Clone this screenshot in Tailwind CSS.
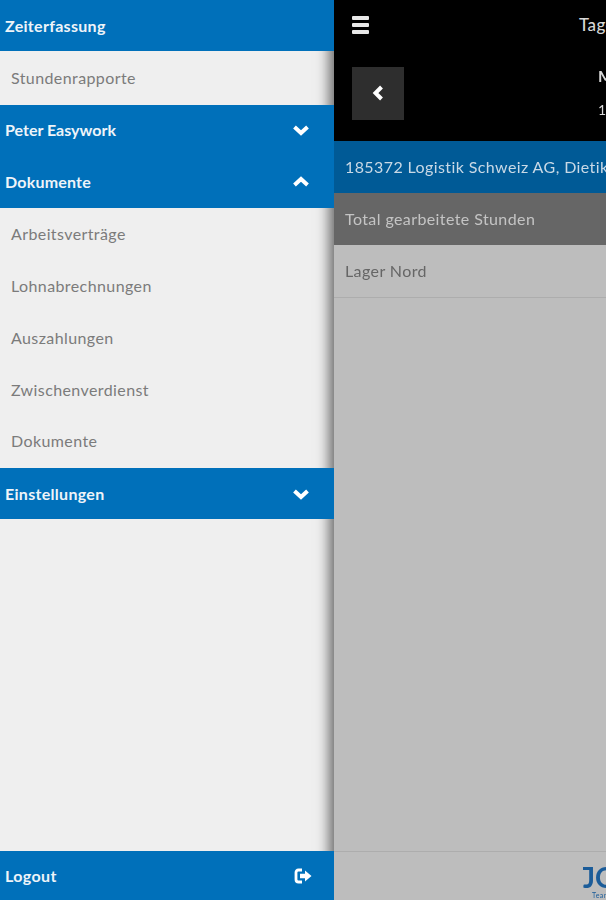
<!DOCTYPE html>
<html lang="de">
<head>
    <meta charset="UTF-8">
    <title>Zeiterfassung</title>
    <script src="https://cdn.jsdelivr.net/npm/@tailwindcss/browser@4"></script>
</head>
<body class="bg-[#bdbdbd]">
    <div class="flex h-[900px] w-[606px] overflow-hidden font-['Lato','Open_Sans',sans-serif] text-[16px] tracking-[0.4px] blur-[0.5px]">

        <!-- Sidebar -->
        <aside class="flex h-full w-[334px] shrink-0 flex-col bg-[#efefef]">
            <div class="relative z-20 flex h-[51px] shrink-0 items-center bg-[#0070ba] pl-[5px] font-bold tracking-[0.3px] text-[#eef4f9]">Zeiterfassung</div>
            <a class="flex h-[54px] shrink-0 items-center pl-[11px] text-[#7b7b7b]">Stundenrapporte</a>

            <div class="relative z-20 flex h-[51px] shrink-0 items-center justify-between bg-[#0070ba] pl-[5px] pr-[25px] pb-[1px] font-bold tracking-[0px] text-[#eef4f9]">
                <span>Peter Easywork</span>
                <svg class="h-[12px] w-[16px]" viewBox="0 0 16 12" fill="none" stroke="#fff" stroke-width="4"><path d="M1.5 3 L8 9 L14.5 3"/></svg>
            </div>
            <div class="relative z-20 flex h-[52px] shrink-0 items-center justify-between bg-[#0070ba] pl-[5px] pr-[25px] pb-[1px] font-bold tracking-[0.2px] text-[#eef4f9]">
                <span>Dokumente</span>
                <svg class="h-[12px] w-[16px]" viewBox="0 0 16 12" fill="none" stroke="#fff" stroke-width="4"><path d="M1.5 9 L8 3 L14.5 9"/></svg>
            </div>

            <a class="flex h-[52px] shrink-0 items-center pl-[11px] text-[#7b7b7b]">Arbeitsverträge</a>
            <a class="flex h-[52px] shrink-0 items-center pl-[11px] text-[#7b7b7b]">Lohnabrechnungen</a>
            <a class="flex h-[52px] shrink-0 items-center pl-[11px] text-[#7b7b7b]">Auszahlungen</a>
            <a class="flex h-[52px] shrink-0 items-center pl-[11px] text-[#7b7b7b]">Zwischenverdienst</a>
            <a class="flex h-[52px] shrink-0 items-center pb-[2px] pl-[11px] text-[#7b7b7b]">Dokumente</a>

            <div class="relative z-20 flex h-[51px] shrink-0 items-center justify-between bg-[#0070ba] pl-[5px] pr-[25px] font-bold tracking-[0.3px] text-[#eef4f9]">
                <span>Einstellungen</span>
                <svg class="h-[12px] w-[16px]" viewBox="0 0 16 12" fill="none" stroke="#fff" stroke-width="4"><path d="M1.5 3 L8 9 L14.5 3"/></svg>
            </div>

            <div class="relative z-20 mt-auto flex h-[49px] shrink-0 items-center justify-between bg-[#0070ba] pl-[5px] pr-[22px] font-bold text-[#eef4f9]">
                <span>Logout</span>
                <svg class="h-[16px] w-[18px]" viewBox="0 0 18 16" fill="none" stroke="#fff"><path d="M8 2 H4.5 Q2 2 2 4.5 V11.5 Q2 14 4.5 14 H8" stroke-width="2.8"/><path d="M6 5.8 H11 V2.5 L17.5 8 L11 13.5 V10.2 H6 Z" fill="#fff" stroke="none"/></svg>
            </div>
        </aside>

        <!-- Hauptbereich -->
        <main class="relative z-10 flex h-full w-[606px] shrink-0 flex-col bg-[#bdbdbd] shadow-[-5px_0_12px_rgba(0,0,0,0.55)]">
            <header class="flex h-[141px] shrink-0 flex-col bg-black text-[#d8d8d8]">
                <div class="flex h-[50px] items-center pl-[18px]">
                    <span class="flex w-[17px] flex-col gap-[3px]">
                        <i class="block h-[4px] rounded-[1px] bg-[#e8e8e8]"></i>
                        <i class="block h-[4px] rounded-[1px] bg-[#e8e8e8]"></i>
                        <i class="block h-[4px] rounded-[1px] bg-[#e8e8e8]"></i>
                    </span>
                    <span class="ml-[210px] text-[17px] font-medium">Tagesrapporte</span>
                </div>
                <div class="mt-[16px] flex items-center pl-[18px]">
                    <button class="flex h-[53px] w-[52px] items-center justify-center bg-[#2e2e2e]">
                        <svg class="h-[16px] w-[12px]" viewBox="0 0 12 16" fill="none" stroke="#fff" stroke-width="4"><path d="M9.5 2 L3.5 8 L9.5 14"/></svg>
                    </button>
                    <div class="ml-[194px] flex flex-col gap-[14px] leading-[20px]">
                        <span class="font-bold">Montag</span>
                        <span class="text-[14px]">12.06.2017</span>
                    </div>
                </div>
            </header>

            <div class="flex h-[52px] shrink-0 items-center whitespace-nowrap bg-[#005a96] pl-[11px] text-[#c9d9e6]">185372 Logistik Schweiz AG, Dietikon</div>
            <div class="flex h-[52px] shrink-0 items-center bg-[#666666] pl-[11px] text-[#c4c4c4]">Total gearbeitete Stunden</div>
            <div class="flex h-[53px] shrink-0 items-center border-b border-[#adadad] pl-[11px] text-[#666666]">Lager Nord</div>

            <footer class="mt-auto flex h-[49px] shrink-0 border-t border-[#adadad] pl-[249px]">
                <div class="relative flex flex-col items-start text-[#1b5c99]">
                    <i class="absolute left-0 top-[15px] block h-[3px] w-[7px] bg-[#1b5c99]"></i>
                    <span class="mt-[11px] text-[28px] font-bold leading-[28px] tracking-[0px]">JOB</span>
                    <span class="ml-[9px] text-[7px] leading-[8px]">Team</span>
                </div>
            </footer>
        </main>
    </div>
</body>
</html>
